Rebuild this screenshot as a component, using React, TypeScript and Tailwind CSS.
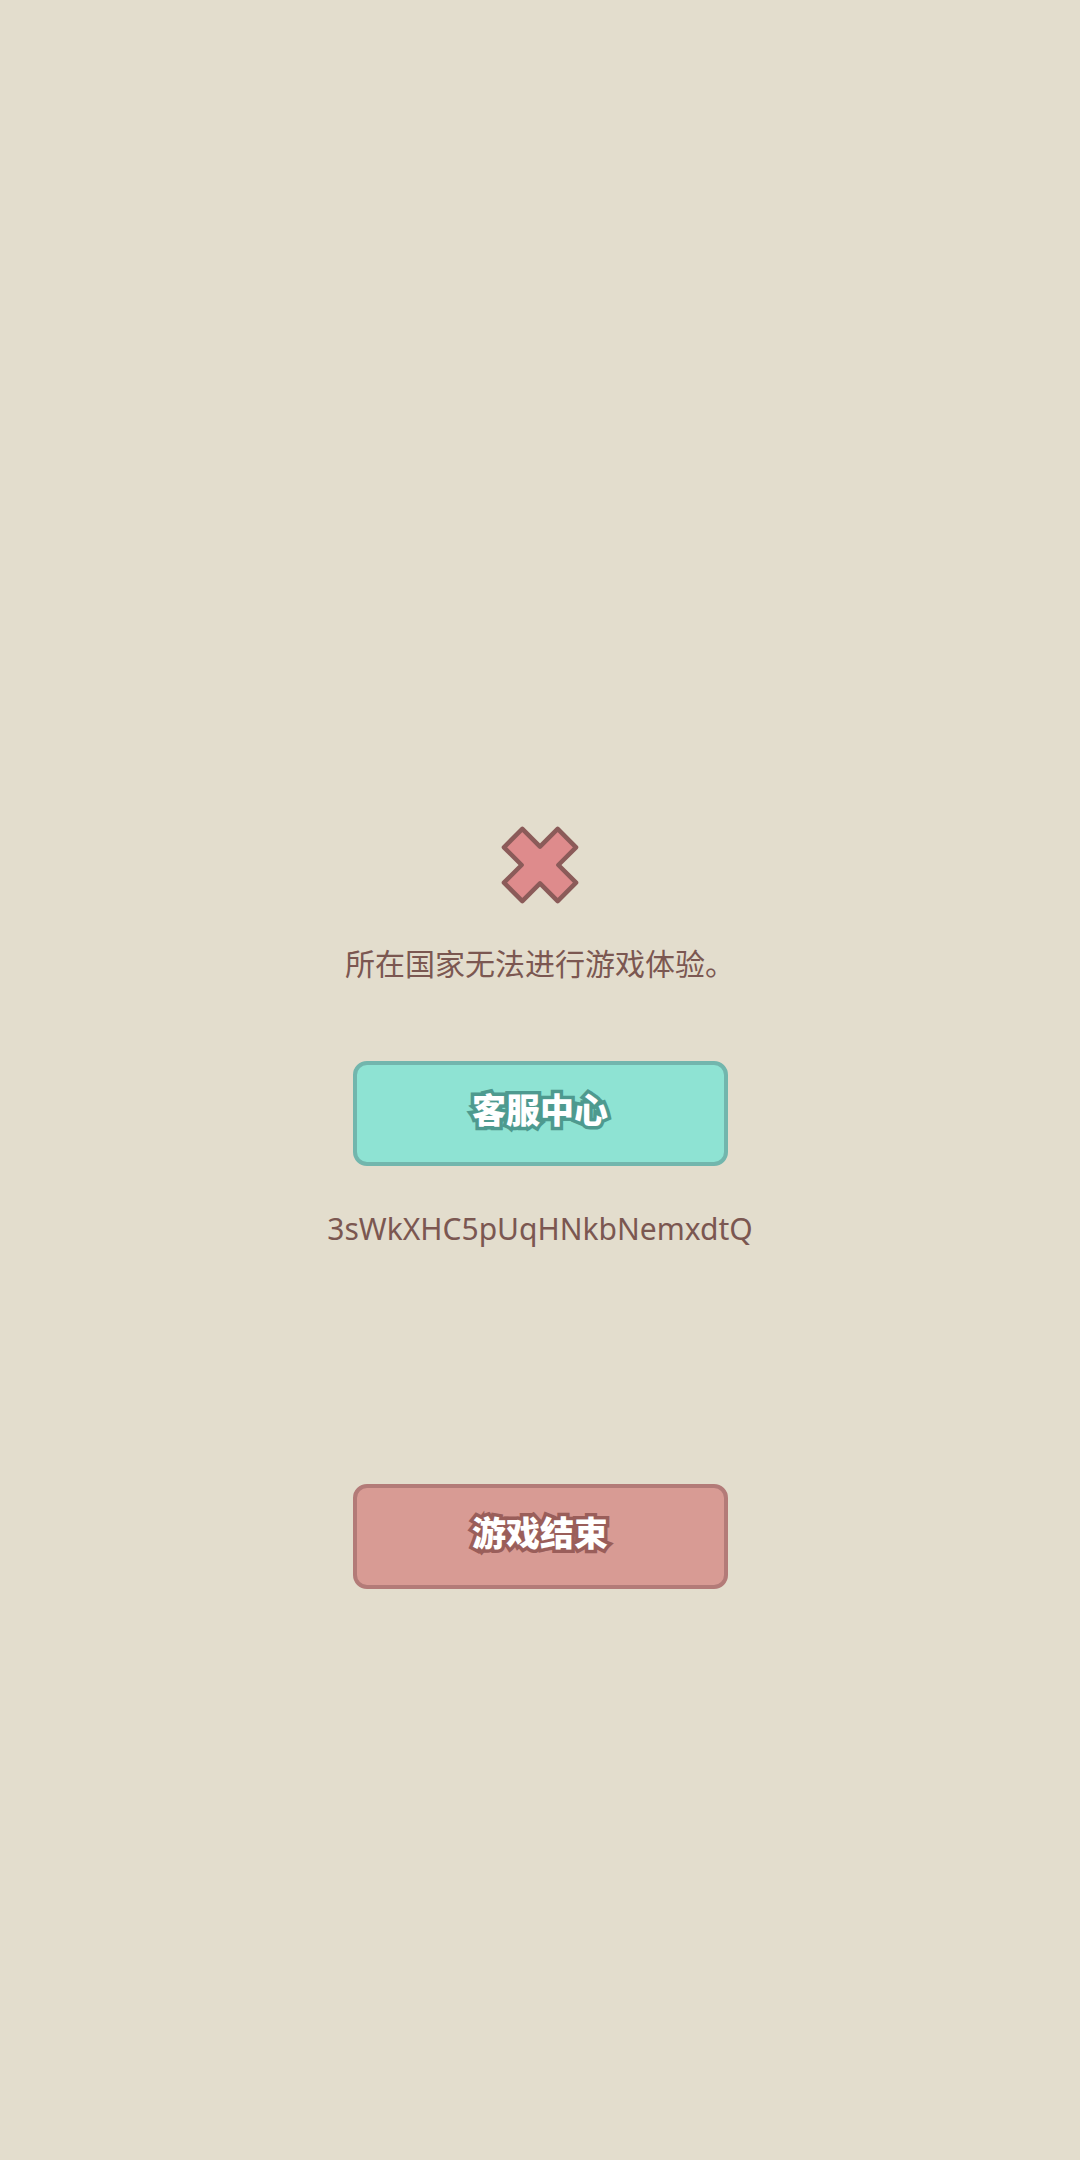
import React from "react";

function CrossIcon() {
  // plus shape rotated 45deg
  const h = 38;
  const w = 13;
  const pts = [
    [-w, -h], [w, -h], [w, -w], [h, -w], [h, w], [w, w],
    [w, h], [-w, h], [-w, w], [-h, w], [-h, -w], [-w, -w],
  ]
    .map((p) => p.join(","))
    .join(" ");
  return (
    <svg width="80" height="80" viewBox="-40 -40 80 80">
      <polygon
        points={pts}
        transform="rotate(45)"
        fill="#de8b8c"
        stroke="#8b5b59"
        strokeWidth="4.5"
        strokeLinejoin="round"
      />
    </svg>
  );
}

function GameButton({
  label,
  fill,
  border,
  stroke,
}: {
  label: string;
  fill: string;
  border: string;
  stroke: string;
}) {
  return (
    <button
      className="flex h-[105px] w-[375px] items-center justify-center rounded-[14px] border-[4px] pb-[8px]"
      style={{ backgroundColor: fill, borderColor: border }}
    >
      <span
        className="text-[34px] font-black leading-none text-white [paint-order:stroke_fill]"
        style={{ WebkitTextStroke: `7px ${stroke}` }}
      >
        {label}
      </span>
    </button>
  );
}

export default function App() {
  return (
    <div
      className="flex min-h-[2160px] w-full flex-col items-center bg-[#e3ddcd] text-[#7b5751]"
      style={{ fontFamily: '"Noto Sans", "Noto Sans CJK SC", sans-serif' }}
    >
      <div className="mt-[825px]">
        <CrossIcon />
      </div>
      <p className="mt-[44px] text-[30px] leading-none">所在国家无法进行游戏体验。</p>
      <div className="mt-[82px]">
        <GameButton label="客服中心" fill="#8ee3d3" border="#72b6ad" stroke="#4e9a8f" />
      </div>
      <p className="mt-[48px] text-[30px] leading-none">3sWkXHC5pUqHNkbNemxdtQ</p>
      <div className="mt-[240px]">
        <GameButton label="游戏结束" fill="#d89b94" border="#b37b78" stroke="#9a5e5a" />
      </div>
    </div>
  );
}
